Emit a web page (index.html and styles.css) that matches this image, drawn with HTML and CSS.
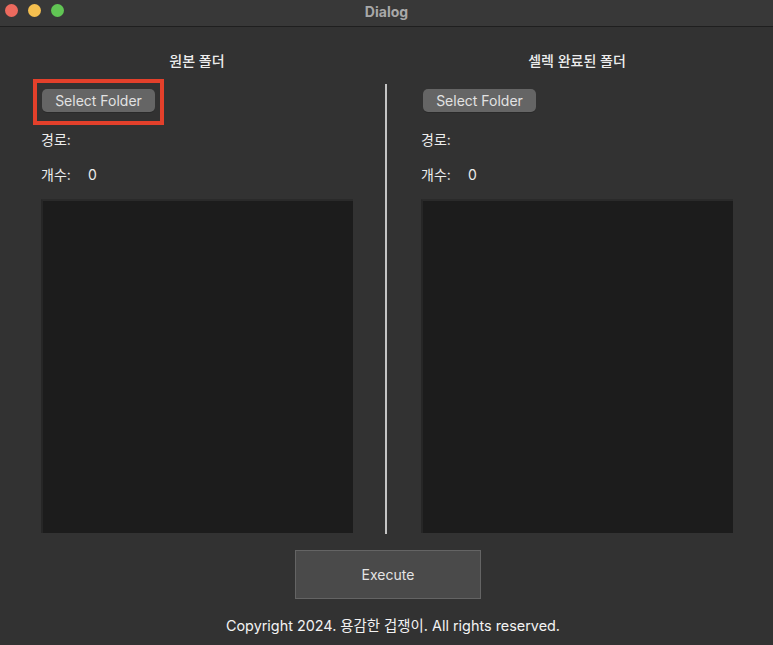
FILE: index.html
```html
<!DOCTYPE html>
<html lang="ko">
<head>
    <meta charset="UTF-8">
    <meta name="viewport" content="width=device-width, initial-scale=1.0">
    <title>Dialog</title>
    <link rel="stylesheet" href="styles.css">
</head>
<body>
    <div class="window">
        <div class="titlebar">
            <div class="lights">
                <span class="light red"></span>
                <span class="light yellow"></span>
                <span class="light green"></span>
            </div>
            <div class="title">Dialog</div>
        </div>

        <main class="content">
            <div class="panels">
                <h2 class="panel-title">원본 폴더</h2>
                <div></div>
                <h2 class="panel-title">셀렉 완료된 폴더</h2>

                <section class="panel">
                    <button class="select-button highlighted">Select Folder</button>
                    <div class="info path">경로:</div>
                    <div class="info count"><span class="count-label">개수:</span>0</div>
                    <div class="file-list"></div>
                </section>

                <div class="divider"></div>

                <section class="panel">
                    <button class="select-button right">Select Folder</button>
                    <div class="info path">경로:</div>
                    <div class="info count"><span class="count-label">개수:</span>0</div>
                    <div class="file-list"></div>
                </section>
            </div>

            <button class="execute-button">Execute</button>
            <p class="copyright">Copyright 2024. 용감한 겁쟁이. All rights reserved.</p>
        </main>
    </div>
</body>
</html>
```

FILE: styles.css
```css
html, body {
    margin: 0;
    height: 100%;
}

body {
    background-color: #323232;
    color: #e8e8e8;
    font-family: Inter, "Noto Sans CJK KR", sans-serif;
}

.window {
    display: flex;
    flex-direction: column;
    height: 100%;
}

.titlebar {
    position: relative;
    height: 26px;
    background-color: #383838;
    border-bottom: 1px solid #1f1f1f;
    display: flex;
    align-items: center;
    justify-content: center;
}

.lights {
    position: absolute;
    left: 5px;
    top: 4px;
    display: flex;
    gap: 10px;
}

.light {
    width: 13px;
    height: 13px;
    border-radius: 50%;
}

.red { background-color: #ec6a5e; }
.yellow { background-color: #f4bf4f; }
.green { background-color: #61c554; }

.title {
    font-size: 14px;
    font-weight: 700;
    color: #a8a8a8;
    margin-top: -3px;
}

.content {
    display: flex;
    flex-direction: column;
    align-items: center;
}

.panels {
    display: grid;
    grid-template-columns: 312px 68px 312px;
    grid-template-rows: 57px 450px;
    margin-left: 1px;
}

.panel-title {
    margin: 0;
    padding-top: 24px;
    font-size: 14px;
    font-weight: 500;
    line-height: 20px;
    text-align: center;
    color: #ededed;
}

.panel {
    display: flex;
    flex-direction: column;
    align-items: flex-start;
}

.select-button {
    position: relative;
    margin-top: 5px;
    margin-left: 1px;
    width: 113px;
    height: 23px;
    padding: 0;
    border: none;
    border-radius: 5px;
    background-color: #656565;
    color: #e2e2e2;
    font-family: inherit;
    font-size: 14px;
    box-shadow: 0 1px 0 #2a2a2a;
}

.select-button.right {
    margin-left: 2px;
}

/* annotation box around the first button */
.highlighted::after {
    content: "";
    position: absolute;
    top: -10px;
    bottom: -13px;
    left: -9px;
    right: -9px;
    border: 4px solid #e3402b;
}

.info {
    font-size: 14px;
    line-height: 20px;
    color: #ececec;
}

.path {
    margin-top: 18px;
}

.count {
    margin-top: 15px;
}

.count-label {
    display: inline-block;
    width: 47px;
}

.file-list {
    margin-top: 14px;
    width: 312px;
    height: 334px;
    box-sizing: border-box;
    background-color: #1c1c1c;
    border-top: 2px solid #2a2a2a;
    border-left: 2px solid #262626;
}

.divider {
    justify-self: center;
    width: 2px;
    height: 450px;
    background-color: #c4c4c4;
    margin-right: 2px;
}

.execute-button {
    margin-top: 16px;
    margin-left: 3px;
    width: 186px;
    height: 49px;
    background-color: #4a4a4a;
    border: 1px solid #646464;
    color: #e4e4e4;
    font-family: inherit;
    font-size: 14px;
}

.copyright {
    margin: 17px 0 0 13px;
    font-size: 14.4px;
    line-height: 20px;
    color: #f2f2f2;
}
```
